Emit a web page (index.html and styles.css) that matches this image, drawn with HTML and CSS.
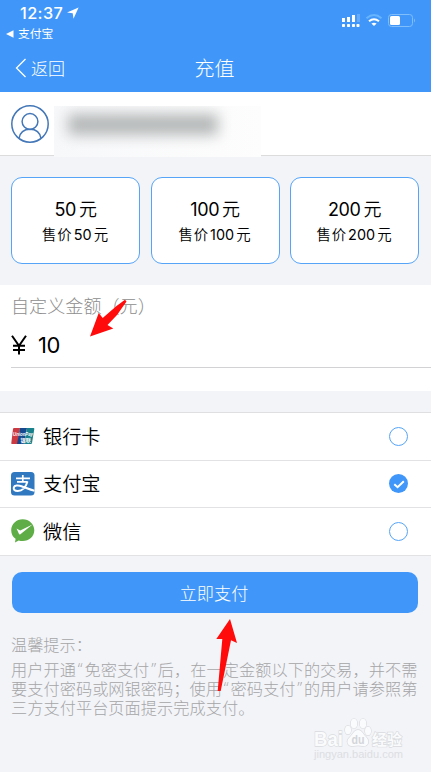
FILE: index.html
```html
<!DOCTYPE html>
<html lang="zh-CN">
<head>
<meta charset="utf-8">
<title>充值</title>
<link rel="stylesheet" href="styles.css">
</head>
<body>
<div class="screen">
  <header class="header">
    <div class="status">
      <div class="status-left">
        <span class="time">12:37</span>
        <svg class="loc" width="12" height="12" viewBox="0 0 12 12"><path d="M11.600.400 0 5.600l5.700.700.800 5.500z" fill="#fff"/></svg>
      </div>
      <svg class="signals" width="76" height="16" viewBox="0 0 76 16">
        <g fill="#fff">
          <path d="M1 6h3v4H1zM6 5h3v5H6zM11 3h3v7h-3z"/>
          <path d="M16 2h3v8h-3z" opacity=".2"/>
          <rect x="1" y="12" width="3" height="3" rx=".7"/><rect x="6" y="12" width="3" height="3" rx=".7"/><rect x="11" y="12" width="3" height="3" rx=".7"/><rect x="15.500" y="12" width="3" height="3" rx=".7"/>
          <path d="M33 14l-2.600-2.400q2.600-1.800 5.200 0z"/>
        </g>
        <g fill="none" stroke-width="2">
          <path d="M28 9.300q5-4.200 10 0" stroke="#fff"/>
          <path d="M25.500 6.200q7.500-6.400 15 0" stroke="#66b4fd"/>
        </g>
        <rect x="47.500" y="2.500" width="24" height="12" rx="3" fill="none" stroke="#7fbefb"/>
        <rect x="49" y="4" width="10" height="9" rx="1.500" fill="#fff"/>
        <path d="M73 6.500q2 2 0 4z" fill="#7fbefb"/>
      </svg>
    </div>
    <div class="back-app"><svg width="8" height="8" viewBox="0 0 8 8"><path d="M0 4l7.500-3.700v7.400z" fill="#fff"/></svg><span>支付宝</span></div>
    <nav class="nav">
      <div class="back"><svg width="12" height="20" viewBox="0 0 12 20"><path d="M10.500 1L1.500 10l9 9" fill="none" stroke="#fff" stroke-width="1.300"/></svg><span>返回</span></div>
      <h1 class="title">充值</h1>
    </nav>
  </header>

  <section class="user">
    <svg width="38" height="38" viewBox="0 0 38 38" fill="none" stroke="#4377b8" stroke-width="1.500"><circle cx="19" cy="19" r="18.200"/><circle cx="19" cy="16.500" r="7.900"/><path d="M8 33.500C9 27.500 13 24.300 19 24.300S29 27.500 30 33.500"/></svg>
    <div class="masked"><div class="smudge"></div></div>
  </section>

  <section class="cards">
    <div class="card"><div class="amount">50<i>元</i></div><div class="price">售价<b>50</b>元</div></div>
    <div class="card"><div class="amount">100<i>元</i></div><div class="price">售价<b>100</b>元</div></div>
    <div class="card"><div class="amount">200<i>元</i></div><div class="price">售价<b>200</b>元</div></div>
  </section>

  <section class="custom">
    <div class="label">自定义金额（元）</div>
    <div class="field"><svg width="16" height="20" viewBox="0 0 16 20"><path d="M1 .8l7 10 7-10M8 10.800V19.500M2 10.800h12M2 15h12" fill="none" stroke="#000" stroke-width="2"/></svg><span>10</span></div>
    <svg class="arrow-field" width="38" height="38" viewBox="0 0 38 38"><path d="M0 37.500L8.700 14l4 5L26.500 7 35 .8l1.500 1.700-9.500 13.500-9.500 10 5.800 3.500z" fill="#ff0b0b"/></svg>
  </section>

  <section class="methods">
    <div class="method">
      <svg class="logo" width="24" height="24" viewBox="0 0 24 24">
        <path d="M3 4h6L7 20H1q-1 0-.7-1L2 5q.2-1 1-1z" fill="#cc3940"/><path d="M9 4h7l-3 16H6z" fill="#17498e"/><path d="M16 4h6.500q1 0 .8 1L21 19q-.2 1-1 1h-7z" fill="#18818c"/>
        <text class="union-en" x="2" y="12" textLength="20" lengthAdjust="spacingAndGlyphs">UnionPay</text><text class="union-cn" x="9.500" y="18" textLength="10.500" lengthAdjust="spacingAndGlyphs">银联</text>
      </svg>
      <span class="name">银行卡</span><span class="radio"></span>
    </div>
    <div class="method">
      <svg class="logo" width="24" height="24" viewBox="0 0 24 24">
        <rect width="23.500" height="23.500" rx="3.500" fill="#3078c0"/>
        <g fill="none" stroke="#fff"><path d="M5 6.300h14M11.800 3v6.800M6 9.900h10.500" stroke-width="1.700"/><path d="M16.500 9.500C15 14.500 11.500 19 6.800 19 3.500 19 2.300 17.300 2.800 15.500 3.400 13.300 7 13 10.500 14.200 15 15.800 19 17.800 23.500 18.700" stroke-width="2"/></g>
      </svg>
      <span class="name">支付宝</span><span class="radio checked"><svg width="18" height="18" viewBox="0 0 18 18"><path d="M4.300 9.200l3.300 3 6.200-6" fill="none" stroke="#fff" stroke-width="2"/></svg></span>
    </div>
    <div class="method">
      <svg class="logo" width="24" height="24" viewBox="0 0 24 24">
        <path d="M11.700.2C18 .2 23.300 5 23.300 11.200S18 22 11.700 22q-2.200 0-4-.6L4 23.600l.6-3.800C1.800 17.800.2 14.800.2 11.200.2 5 5.400.2 11.700.2z" fill="#5fad46"/><path d="M5.500 9.500l3.700 2L21.500 5.500 9.400 15.200q-1 .7-1.500-.5z" fill="#fff"/>
      </svg>
      <span class="name">微信</span><span class="radio"></span>
    </div>
  </section>

  <button class="pay">立即支付</button>

  <section class="tips">
    <div class="tips-title">温馨提示：</div>
    <p>用户开通<q>“</q>免密支付<q>”</q>后，在一定金额以下的交易，并不需</p>
    <p>要支付密码或网银密码；使用<q>“</q>密码支付<q>”</q>的用户请参照第</p>
    <p>三方支付平台页面提示完成支付。</p>
    <svg class="arrow-pay" width="22" height="74" viewBox="0 0 22 74"><path d="M14 0L21 24l-6-2.700L4.700 72h-3L6.300 20 .3 20z" fill="#ff0b0b"/></svg>
  </section>

  <svg class="watermark" width="96" height="50" viewBox="0 0 96 50">
    <g class="wm-shape">
      <text class="wm-brand" x="1" y="30" textLength="29" lengthAdjust="spacingAndGlyphs">Bai</text>
      <ellipse cx="35" cy="14" rx="3" ry="4.300"/><ellipse cx="41" cy="7.500" rx="3.200" ry="4.700"/><ellipse cx="50" cy="7.500" rx="3.200" ry="4.700"/><ellipse cx="55" cy="15" rx="3" ry="4.300"/>
      <path d="M45 14c4 0 5 4 8 7 5 5 1 10-3 9-4-.8-6-.8-10 0-5 1-8-5-3-9 3-3 4-7 8-7z"/>
      <text class="wm-cn" x="59" y="29" textLength="30" lengthAdjust="spacingAndGlyphs">经验</text>
    </g>
    <text class="wm-du" x="38.500" y="28" textLength="13" lengthAdjust="spacingAndGlyphs">du</text>
    <text class="wm-url" x="1" y="42" textLength="89" lengthAdjust="spacingAndGlyphs">jingyan.baidu.com</text>
  </svg>
</div>
</body>
</html>
```

FILE: styles.css
```css
* { box-sizing: border-box; }
body { margin: 0; font-family: Inter, "Noto Sans CJK SC", sans-serif; color: #000; }
.screen { position: relative; width: 431px; height: 772px; overflow: hidden; background: #f3f4f8; }

.header { height: 92px; background: #4097f9; color: #fff; }
.status { display: flex; justify-content: space-between; height: 27px; padding: 3px 14px 0 20px; }
.status-left { display: flex; gap: 4px; }
.time { font-size: 16.300px; line-height: 20px; font-weight: 500; letter-spacing: .4px; }
.loc { margin-top: 4px; }
.signals { margin-top: 9px; flex: none; }
.back-app { display: flex; align-items: center; gap: 4px; height: 14px; padding-left: 6px; font-size: 11.800px; line-height: 14px; }
.nav { position: relative; display: flex; align-items: center; height: 54px; padding-left: 15px; }
.back { display: flex; align-items: center; gap: 4px; font-size: 17px; font-weight: 300; line-height: 24px; }
.back span { margin-top: 1px; }
.title { position: absolute; inset: 1px 0 0; margin: 0 2px 0 0; text-align: center; font-size: 20px; line-height: 54px; font-weight: 300; pointer-events: none; }

.user { display: flex; height: 64px; padding: 13px 11px 0; gap: 5px; background: #fff; border-bottom: 1px solid #dcdcdc; }
.masked { width: 207px; height: 51px; margin-top: 1px; background: linear-gradient(to right, #f7f8fa, #fdfdfd); overflow: hidden; }
.smudge { width: 150px; height: 21px; margin: 8px 0 0 14px; background: #b5b8b8; filter: blur(7px); }

.cards { display: grid; grid-template-columns: repeat(3, 1fr); gap: 10.500px; padding: 21px 12px 21px 11px; height: 128.500px; }
.card { display: flex; flex-direction: column; align-items: center; padding-top: 19px; background: #fff; border: 1.300px solid #55a4f8; border-radius: 11px; }
.amount { font-size: 18px; line-height: 26px; letter-spacing: -.4px; }
.amount i { font-style: normal; font-weight: 350; margin-left: 3px; }
.price { font-size: 14.400px; line-height: 24px; font-weight: 350; letter-spacing: .9px; }
.price b { font-weight: 400; letter-spacing: .1px; margin: 0 2px 0 1px; }

.custom { position: relative; height: 106.500px; padding: 8px 0 0 11px; background: #fff; }
.label { font-size: 18.100px; line-height: 26px; font-weight: 300; color: #8d8d8d; }
.field { display: flex; align-items: center; gap: 11px; height: 49px; padding-top: 4px; font-size: 22px; border-bottom: 1px solid #d2d2d4; }
.field span { letter-spacing: -.5px; }
.arrow-field { position: absolute; left: 90px; top: 14px; }

.methods { margin-top: 21px; background: #fff; border-top: 1px solid #dfdfe2; }
.method { display: flex; align-items: center; height: 47.500px; padding: 0 23px 0 11px; border-bottom: 1px solid #e2e2e4; }
.name { flex: 1; margin: 1px 0 0 8px; font-size: 19.200px; line-height: 28px; font-weight: 350; }
.radio { width: 19px; height: 19px; border: 1.300px solid #55a4f8; border-radius: 50%; }
.radio.checked { display: flex; align-items: center; justify-content: center; border: 0; background: #4097f9; }
.union-en { font: italic bold 5.500px "Liberation Sans", sans-serif; fill: #fff; }
.union-cn { font: bold 5px "Noto Sans CJK SC", sans-serif; fill: #fff; }

.pay { display: block; width: 406px; height: 41px; margin: 16.500px 0 0 12px; padding: 0 2px 0 0; border: 0; border-radius: 10px; background: #4097f9; color: #fff; font: 300 17.200px/40px "Noto Sans CJK SC", sans-serif; }

.tips { position: relative; padding: 21px 0 0 11px; color: #a5a5a7; font-size: 16.200px; font-weight: 300; font-family: "Noto Sans CJK SC", sans-serif; white-space: nowrap; }
.tips-title { line-height: 20px; margin-bottom: 6px; }
.tips p { display: flex; height: 19px; margin: 0; line-height: 19px; letter-spacing: .04px; }
.tips q { quotes: none; width: 8.500px; text-align: center; font-family: "Open Sans", sans-serif; font-size: 16px; }
.tips q::before, .tips q::after { content: none; }
.arrow-pay { position: absolute; left: 216px; top: 6px; }

.watermark { position: absolute; left: 313px; top: 716px; }
.wm-shape { fill: #fafbfc; stroke: #d9dbdf; stroke-width: 1.300px; paint-order: stroke; }
.wm-brand { font: bold 21px "Liberation Sans", sans-serif; }
.wm-cn { font: bold 15px "Noto Sans CJK SC", sans-serif; }
.wm-du { font: bold 12px "Liberation Sans", sans-serif; fill: #d3d5d9; }
.wm-url { font: 10px "Liberation Sans", sans-serif; fill: #dcdee2; }
```
